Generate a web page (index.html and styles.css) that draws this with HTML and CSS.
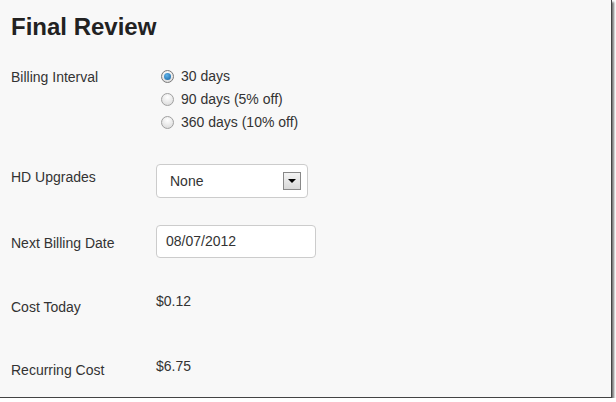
FILE: index.html
```html
<!DOCTYPE html>
<html>
  <head>
    <title>Final Review</title>
    <meta charset="utf-8" />
    <link rel="stylesheet" href="styles.css">
  </head>
  <body>
    <div class="shot">
      <h1>Final Review</h1>

      <div class="row row-interval">
        <div class="label">Billing Interval</div>
        <div class="radios">
          <label class="radio"><span class="dot checked"></span>30 days</label>
          <label class="radio"><span class="dot"></span>90 days (5% off)</label>
          <label class="radio"><span class="dot"></span>360 days (10% off)</label>
        </div>
      </div>

      <div class="row row-hd">
        <div class="label">HD Upgrades</div>
        <div class="select">
          <span>None</span>
          <span class="arrow"></span>
        </div>
      </div>

      <div class="row row-date">
        <div class="label">Next Billing Date</div>
        <div class="input">08/07/2012</div>
      </div>

      <div class="row row-today">
        <div class="label">Cost Today</div>
        <div class="value">$0.12</div>
      </div>

      <div class="row row-recurring">
        <div class="label">Recurring Cost</div>
        <div class="value">$6.75</div>
      </div>
    </div>
  </body>
</html>
```

FILE: styles.css
```css
* {
  box-sizing: border-box;
}
html,
body {
  margin: 0;
  background: #ffffff;
  font-family: "Liberation Sans", Arial, sans-serif;
  font-size: 14px;
  color: #333333;
}

.shot {
  width: 612px;
  height: 398px;
  background: #f8f8f8;
  border-right: 1px solid #444;
  border-bottom: 1px solid #444;
  box-shadow: 2px 2px 2px rgba(0, 0, 0, 0.55);
  padding: 11px 0 0 11px;
  overflow: hidden;
}

h1 {
  margin: 0;
  font-size: 24px;
  line-height: 32px;
  font-weight: bold;
  color: #222;
}

.row {
  display: flex;
}

.label {
  width: 145px;
  flex: none;
}

.row-interval {
  margin-top: 21px;
}
.row-interval .label {
  padding-top: 5px;
}

.radios {
  display: flex;
  flex-direction: column;
}
.radio {
  display: flex;
  align-items: center;
  height: 23px;
  padding-left: 5px;
}

.dot {
  width: 13px;
  height: 13px;
  border-radius: 50%;
  border: 1px solid #a0a0a0;
  background: radial-gradient(circle at 50% 30%, #ffffff, #d6d6d6);
  margin-right: 7px;
  margin-top: 2px;
  position: relative;
}
.dot.checked {
  border-color: #7a7a7a;
}
.dot.checked::after {
  content: "";
  position: absolute;
  left: 2px;
  top: 2px;
  width: 7px;
  height: 7px;
  border-radius: 50%;
  background: radial-gradient(circle at 40% 35%, #5eb3ea, #15609e);
}

.row-hd {
  margin-top: 31px;
}
.row-hd .label {
  padding-top: 5px;
}

.select {
  width: 152px;
  height: 34px;
  border: 1px solid #cccccc;
  border-radius: 4px;
  background: #fff;
  display: flex;
  align-items: center;
  justify-content: space-between;
  padding: 0 6px 0 13px;
}
.arrow {
  width: 18px;
  height: 18px;
  border: 1px solid #888;
  background: linear-gradient(#f4f4f4, #d8d8d8);
  position: relative;
}
.arrow::after {
  content: "";
  position: absolute;
  left: 4px;
  top: 6px;
  border-left: 4px solid transparent;
  border-right: 4px solid transparent;
  border-top: 4px solid #000;
}

.row-date {
  margin-top: 27px;
}
.row-date .label {
  padding-top: 10px;
}

.input {
  width: 160px;
  height: 33px;
  border: 1px solid #cccccc;
  border-radius: 4px;
  background: #fff;
  padding: 7px 0 0 9px;
}

.row-today {
  margin-top: 35px;
}
.row-today .label {
  padding-top: 6px;
}

.row-recurring {
  margin-top: 43px;
}
.row-recurring .label {
  padding-top: 4px;
}
```
